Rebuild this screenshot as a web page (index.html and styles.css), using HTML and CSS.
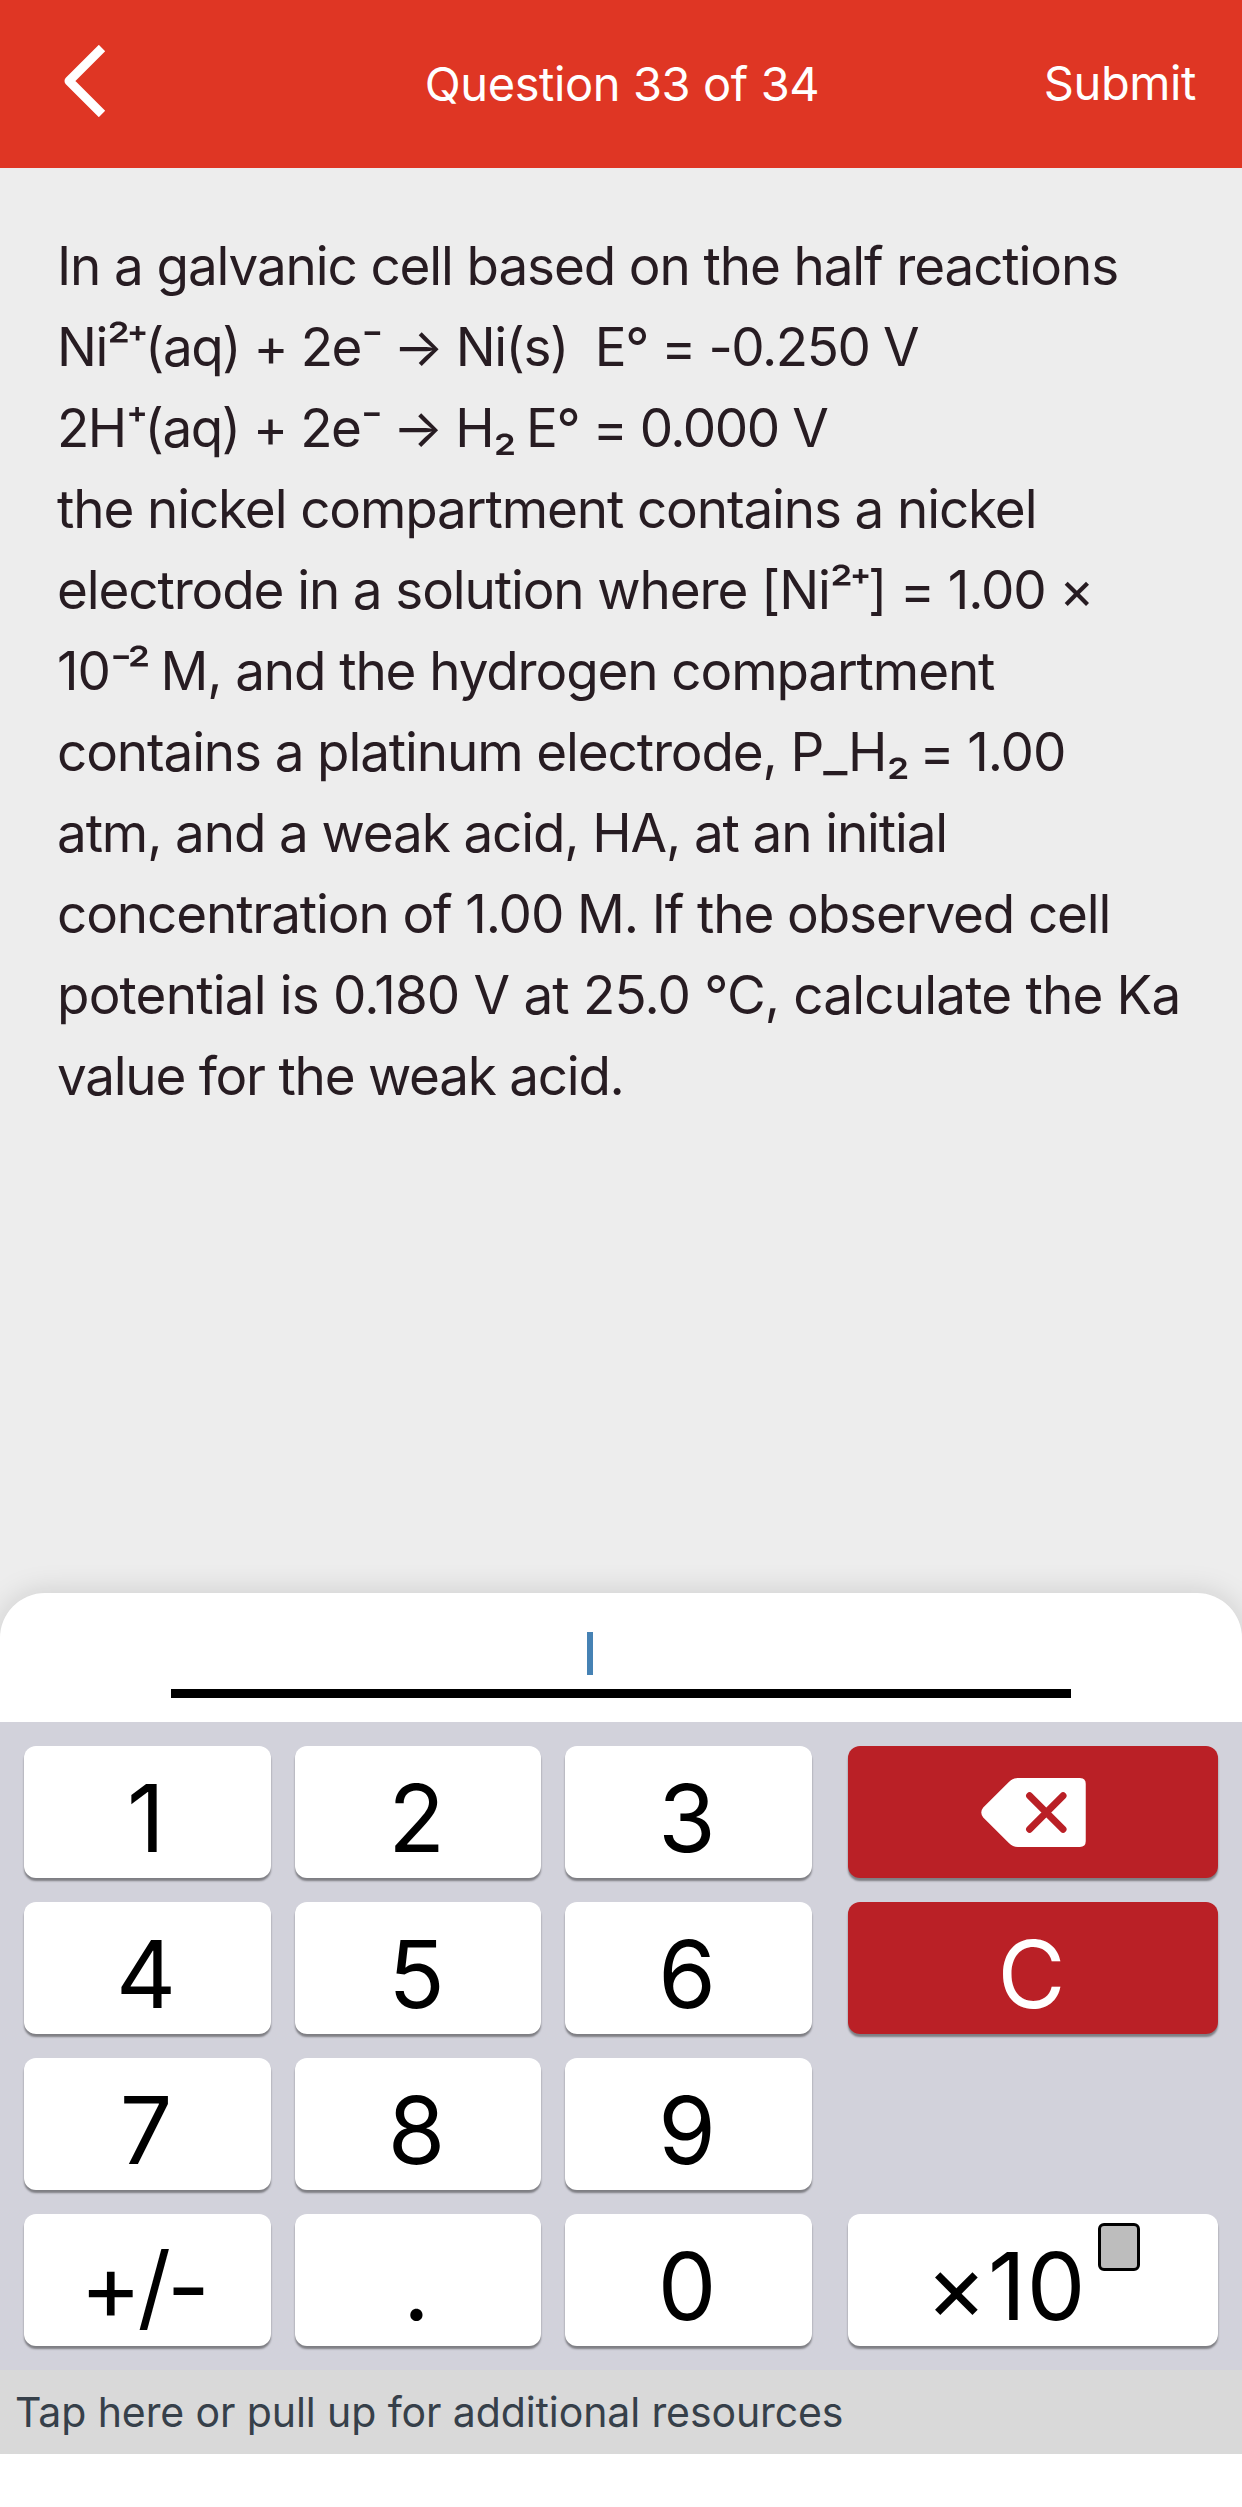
FILE: index.html
```html
<!DOCTYPE html>
<html lang="en">
<head>
    <meta charset="UTF-8">
    <meta name="viewport" content="width=device-width, initial-scale=1.0">
    <title>Question 33 of 34</title>
    <link rel="stylesheet" href="styles.css">
</head>
<body>
<header class="topbar">
    <button class="back" aria-label="Back">
        <svg width="44" height="72" viewBox="0 0 44 72">
            <path d="M39 3 L6 36 L39 69" fill="none" stroke="#fff" stroke-width="9" stroke-linejoin="round"/>
        </svg>
    </button>
    <h1 class="title">Question 33 of 34</h1>
    <button class="submit">Submit</button>
</header>

<main class="question">
    <p>
        <span class="line">In a galvanic cell based on the half reactions</span>
        <span class="line formula">Ni<span class="script">²⁺</span>(aq) + 2e<span class="script">⁻</span> → Ni(s)&nbsp; E° = -0.250 V</span>
        <span class="line formula">2H<span class="script">⁺</span>(aq) + 2e<span class="script">⁻</span> → H<span class="script">₂</span> E° = 0.000 V</span>
        <span class="line">the nickel compartment contains a nickel</span>
        <span class="line">electrode in a solution where [Ni<span class="script">²⁺</span>] = 1.00 ×</span>
        <span class="line">10<span class="script">⁻²</span> M, and the hydrogen compartment</span>
        <span class="line">contains a platinum electrode, P_H<span class="script">₂</span> = 1.00</span>
        <span class="line">atm, and a weak acid, HA, at an initial</span>
        <span class="line">concentration of 1.00 M. If the observed cell</span>
        <span class="line wide">potential is 0.180 V at 25.0 °C, calculate the Ka</span>
        <span class="line narrow">value for the weak acid.</span>
    </p>
</main>

<section class="answer">
    <div class="answer-line"><span class="cursor"></span></div>
</section>

<section class="keypad">
    <button class="key">1</button>
    <button class="key">2</button>
    <button class="key">3</button>
    <button class="key side red delete" aria-label="Delete">
        <svg width="105" height="69" viewBox="0 0 106 70">
            <path d="M37 0 H100 Q106 0 106 6 V64 Q106 70 100 70 H37 Q32 70 28 66 L2 40 Q-2 35 2 30 L28 4 Q32 0 37 0 Z" fill="#fff"/>
            <path d="M49 18 L83 52 M83 18 L49 52" fill="none" stroke="#ba2026" stroke-width="7" stroke-linecap="round"/>
        </svg>
    </button>

    <button class="key">4</button>
    <button class="key">5</button>
    <button class="key">6</button>
    <button class="key side red">C</button>

    <button class="key">7</button>
    <button class="key">8</button>
    <button class="key">9</button>
    <div></div>

    <button class="key sign">+/-</button>
    <button class="key">.</button>
    <button class="key">0</button>
    <button class="key side exponent">×10<i class="exp-box"></i></button>
</section>

<footer class="resources">Tap here or pull up for additional resources</footer>
</body>
</html>
```
FILE: styles.css
```css
* {
    box-sizing: border-box;
}
body {
    margin: 0;
    background-color: #fff;
    font-family: Inter, "Liberation Sans", sans-serif;
    font-feature-settings: "calt" 0;
}
button {
    border: none;
    padding: 0;
    background: none;
    color: inherit;
    font: inherit;
}

/* header */
.topbar {
    display: grid;
    grid-template-columns: 1fr auto 1fr;
    align-items: center;
    height: 168px;
    padding: 0 46px;
    background-color: #df3624;
    color: #fff;
}
.back {
    display: flex;
    margin: 0 0 6px 17px;
}
.title {
    margin: 0 0 2px 2px;
    font-size: 47px;
    font-weight: 400;
    letter-spacing: -0.4px;
}
.submit {
    justify-self: end;
    margin-bottom: 4px;
    font-size: 47px;
    letter-spacing: -0.4px;
}

/* question text */
.question {
    height: 1470px;
    margin-bottom: -45px;
    padding: 58px 57px;
    background-color: #ededed;
    color: #271c22;
}
.question p {
    margin: 0;
    font-size: 53px;
    line-height: 81px;
    white-space: nowrap;
}
.line {
    display: block;
    letter-spacing: -1.12px;
}
.formula {
    letter-spacing: -1.45px;
}
.wide {
    letter-spacing: -0.82px;
}
.narrow {
    letter-spacing: -1.25px;
}
.script {
    letter-spacing: -4px;
}

/* answer sheet */
.answer {
    position: relative;
    height: 129px;
    padding: 36px 171px 24px;
    border-radius: 45px 45px 0 0;
    background-color: #fff;
    box-shadow: 0 0 30px rgba(0, 0, 0, 0.15);
}
.answer-line {
    height: 69px;
    padding: 3px 0 0 416px;
    border-bottom: 9px solid #000;
}
.cursor {
    display: block;
    width: 6px;
    height: 43px;
    background-color: #4682b4;
}

/* keypad */
.keypad {
    position: relative;
    display: grid;
    grid-template-columns: 247px 246px 247px 382px;
    grid-template-rows: repeat(4, 132px);
    gap: 24px;
    height: 648px;
    padding: 24px;
    background-color: #d2d2db;
}
.key {
    display: flex;
    justify-content: center;
    padding: 12px 3px 0 0;
    border-radius: 12px;
    background-color: #fff;
    box-shadow: 0 3px 2px rgba(0, 0, 0, 0.4);
    color: #000;
    font-size: 93px;
    line-height: 120px;
}
.side {
    margin-left: 12px;
}
.red {
    background-color: #ba2026;
    color: #fff;
}
.delete {
    align-items: center;
    padding: 0;
}
.sign {
    padding-right: 9px;
    letter-spacing: -4px;
}
.exponent {
    padding-right: 1px;
    letter-spacing: 1px;
}
.exp-box {
    width: 42px;
    height: 48px;
    margin: -3px 0 0 11px;
    border: 3px solid #000;
    border-radius: 6px;
    background-color: #bdbdbd;
}

.resources {
    height: 84px;
    padding-left: 15px;
    background-color: #d9d9d9;
    color: #36404a;
    font-size: 41px;
    line-height: 84px;
    letter-spacing: -0.1px;
}
```
